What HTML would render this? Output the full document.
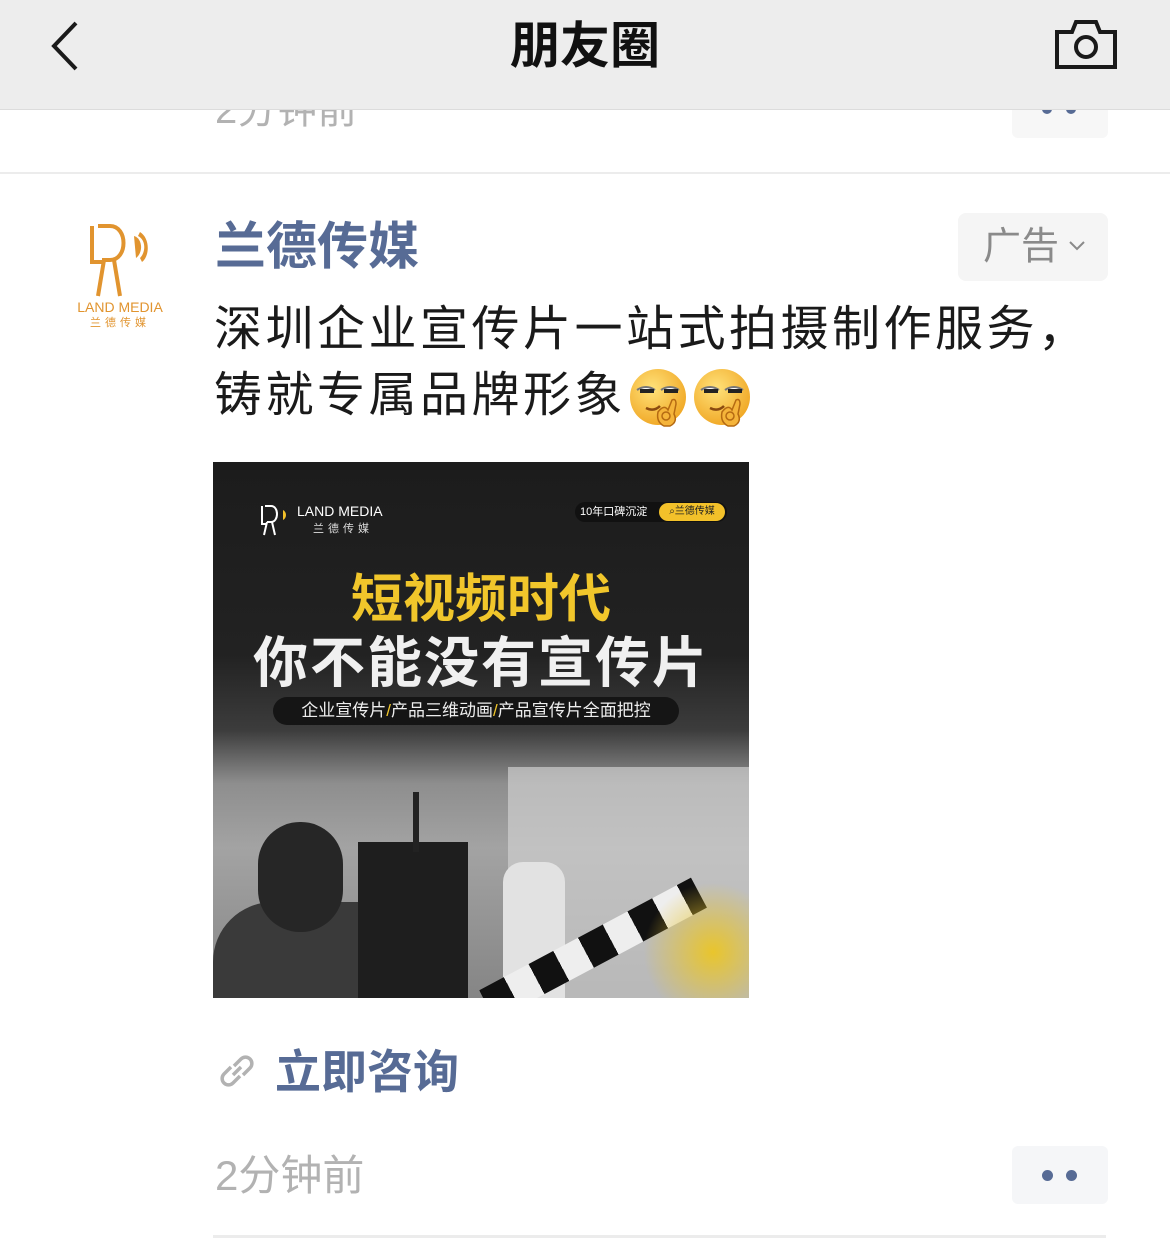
<!DOCTYPE html>
<html><head><meta charset="utf-8"><style>
*{margin:0;padding:0;box-sizing:border-box}
body{width:1170px;height:1239px;background:#fff;position:relative;overflow:hidden;font-family:"Liberation Sans","Noto Sans CJK SC",sans-serif}
.abs{position:absolute}
</style></head><body>
<div class="abs" style="left:215px;top:88px;font-size:40px;color:#b2b2b2;line-height:44px">2分钟前</div>
<div class="abs" style="left:1012px;top:84px;width:96px;height:54px;background:#f7f7f7;border-radius:6px"></div>
<div class="abs" style="left:1042px;top:104px;width:10px;height:10px;border-radius:50%;background:#576b95"></div>
<div class="abs" style="left:1066px;top:104px;width:10px;height:10px;border-radius:50%;background:#576b95"></div>
<div class="abs" style="left:0;top:172px;width:1170px;height:2px;background:#ececec"></div>
<div class="abs" style="left:0;top:0;width:1170px;height:110px;background:#ededed;border-bottom:1px solid #dcdcdc"></div>
<svg class="abs" style="left:48px;top:20px" width="34" height="52" viewBox="0 0 34 52"><path d="M28 3 L6 26 L28 49" fill="none" stroke="#1a1a1a" stroke-width="4"/></svg>
<div class="abs" style="left:0;top:14px;width:1170px;text-align:center;font-size:50px;font-weight:bold;color:#111;line-height:64px">朋友圈</div>
<svg class="abs" style="left:1054px;top:18px" width="64" height="52" viewBox="0 0 64 52"><path d="M3 14 H18 L22 4 H42 L46 14 H61 V49 H3 Z" fill="none" stroke="#1a1a1a" stroke-width="4"/><circle cx="32" cy="29" r="10" fill="none" stroke="#1a1a1a" stroke-width="4"/></svg>
<svg class="abs" style="left:84px;top:222px" width="72" height="76" viewBox="0 0 72 76"><g fill="none" stroke="#e1942f" stroke-width="4"><path d="M8 4 V40 H20"/><path d="M14 4 H26 C44 4 44 38 26 38 H18"/><path d="M20 38 L14 74"/><path d="M30 38 L36 74"/></g><path d="M50 14 C58 16 60 30 52 36 Z" fill="#e1942f"/><path d="M56 10 C66 16 66 34 58 40 L56 36 C62 30 62 18 54 14Z" fill="#e1942f"/></svg>
<div class="abs" style="left:70px;top:299px;width:100px;text-align:center;font-size:14px;color:#e1942f;line-height:16px">LAND MEDIA</div>
<div class="abs" style="left:70px;top:316px;width:100px;text-align:center;font-size:11px;color:#e1942f;letter-spacing:4px;line-height:14px">兰德传媒</div>
<div class="abs" style="left:215px;top:217px;font-size:51px;font-weight:bold;color:#576b95;line-height:60px">兰德传媒</div>
<div class="abs" style="left:958px;top:213px;width:150px;height:68px;background:#f5f5f5;border-radius:8px"></div>
<div class="abs" style="left:983px;top:223px;font-size:38px;color:#8a8a8a;line-height:48px">广告</div>
<svg class="abs" style="left:1068px;top:240px" width="18" height="12" viewBox="0 0 18 12"><path d="M2 2 L9 9 L16 2" fill="none" stroke="#8a8a8a" stroke-width="2"/></svg>
<div class="abs" style="left:214px;top:297px;width:940px;font-size:48px;letter-spacing:3.5px;color:#1a1a1a;line-height:66px;white-space:nowrap">深圳企业宣传片一站式拍摄制作服务，<br>铸就专属品牌形象</div>
<svg class="abs" style="left:628px;top:366px" width="130" height="64" viewBox="0 0 130 64">
<defs><radialGradient id="g" cx="40%" cy="35%" r="70%"><stop offset="0" stop-color="#ffe27a"/><stop offset="1" stop-color="#f0a623"/></radialGradient></defs>
<g id="e"><circle cx="30" cy="31" r="28" fill="url(#g)"/><path d="M9 24 q9-6 18 0 M33 24 q9-6 18 0" fill="#fff" stroke="#777" stroke-width="2"/><path d="M12 25 h14 M36 25 h14" stroke="#222" stroke-width="4"/><path d="M18 42 q8 4 14 -2" fill="none" stroke="#8a4a10" stroke-width="2.5"/><path d="M36 60 q-8-4-6-14 q6-8 10-2 l4-10 q4-2 4 4 l-2 10 q4 8-4 12z" fill="#f5b43a" stroke="#b56a12" stroke-width="1.5"/><circle cx="38" cy="50" r="4" fill="none" stroke="#b56a12" stroke-width="1.5"/></g>
<use href="#e" x="64"/>
</svg>
<div class="abs" style="left:213px;top:462px;width:536px;height:536px;background:linear-gradient(180deg,#1c1c1c 0%,#222 36%,#3c3c3c 50%,#8e8e8e 60%,#a3a3a3 72%,#858585 100%);overflow:hidden">
  <div class="abs" style="left:295px;top:305px;width:241px;height:231px;background:#cfcfcf;opacity:.7"></div>
  <div class="abs" style="left:0;top:440px;width:210px;height:96px;background:#3a3a3a;border-radius:60px 60px 0 0"></div>
  <div class="abs" style="left:45px;top:360px;width:85px;height:110px;background:#262626;border-radius:42px"></div>
  <div class="abs" style="left:145px;top:380px;width:110px;height:156px;background:#1e1e1e"></div>
  <div class="abs" style="left:200px;top:330px;width:6px;height:60px;background:#222"></div>
  <div class="abs" style="left:290px;top:400px;width:62px;height:136px;background:#e2e2e2;border-radius:20px 20px 0 0"></div>
  <div class="abs" style="left:260px;top:470px;width:240px;height:34px;background:repeating-linear-gradient(90deg,#111 0 28px,#eee 28px 56px);transform:rotate(-28deg)"></div>
  <div class="abs" style="left:430px;top:420px;width:140px;height:140px;background:radial-gradient(#e9c52c,transparent 70%)"></div>
  <svg class="abs" style="left:46px;top:42px" width="34" height="32" viewBox="0 0 34 32"><g fill="none" stroke="#fff" stroke-width="2"><path d="M3 2V20H8"/><path d="M6 2H12C20 2 20 18 12 18H8"/><path d="M8 18L5 31M13 18L16 31"/></g><path d="M24 6 C28 8 28 14 24 16Z" fill="#f3c12a"/></svg>
  <div class="abs" style="left:84px;top:40px;font-size:14px;color:#fff;line-height:18px">LAND MEDIA</div>
  <div class="abs" style="left:100px;top:58px;font-size:11px;color:#ddd;letter-spacing:4px">兰德传媒</div>
  <div class="abs" style="left:362px;top:40px;width:152px;height:20px;background:#111;border-radius:10px"></div>
  <div class="abs" style="left:367px;top:41px;font-size:11px;color:#fff;line-height:18px">10年口碑沉淀</div>
  <div class="abs" style="left:446px;top:41px;width:66px;height:18px;background:#f3c12a;border-radius:9px;font-size:10px;color:#222;line-height:18px;text-align:center">⌕兰德传媒</div>
  <div class="abs" style="left:0;top:106px;width:536px;text-align:center;font-size:52px;font-weight:bold;color:#f1c62b;line-height:64px">短视频时代</div>
  <div class="abs" style="left:0;top:168px;width:536px;text-align:center;font-size:55px;font-weight:bold;color:#f0f0f0;line-height:66px;letter-spacing:2px">你不能没有宣传片</div>
  <div class="abs" style="left:60px;top:235px;width:406px;height:28px;background:#151515;border-radius:14px;text-align:center;font-size:17px;color:#eee;line-height:28px">企业宣传片<span style="color:#f1c62b">/</span>产品三维动画<span style="color:#f1c62b">/</span>产品宣传片全面把控</div>
</div>
<svg class="abs" style="left:218px;top:1052px" width="38" height="38" viewBox="0 0 38 38"><g fill="none" stroke="#b2b2b2" stroke-width="3.5"><path d="M16 14 l7 -7 a6 6 0 0 1 9 9 l-7 7"/><path d="M22 24 l-7 7 a6 6 0 0 1 -9 -9 l7 -7"/><path d="M15 23 l8 -8"/></g></svg>
<div class="abs" style="left:275px;top:1042px;font-size:46px;font-weight:bold;color:#576b95;line-height:60px">立即咨询</div>
<div class="abs" style="left:215px;top:1150px;font-size:42px;color:#b2b2b2;line-height:52px">2分钟前</div>
<div class="abs" style="left:1012px;top:1146px;width:96px;height:58px;background:#f5f6f8;border-radius:6px"></div>
<div class="abs" style="left:1042px;top:1170px;width:11px;height:11px;border-radius:50%;background:#576b95"></div>
<div class="abs" style="left:1066px;top:1170px;width:11px;height:11px;border-radius:50%;background:#576b95"></div>
<div class="abs" style="left:213px;top:1235px;width:893px;height:3px;background:#ececec"></div>
</body></html>
